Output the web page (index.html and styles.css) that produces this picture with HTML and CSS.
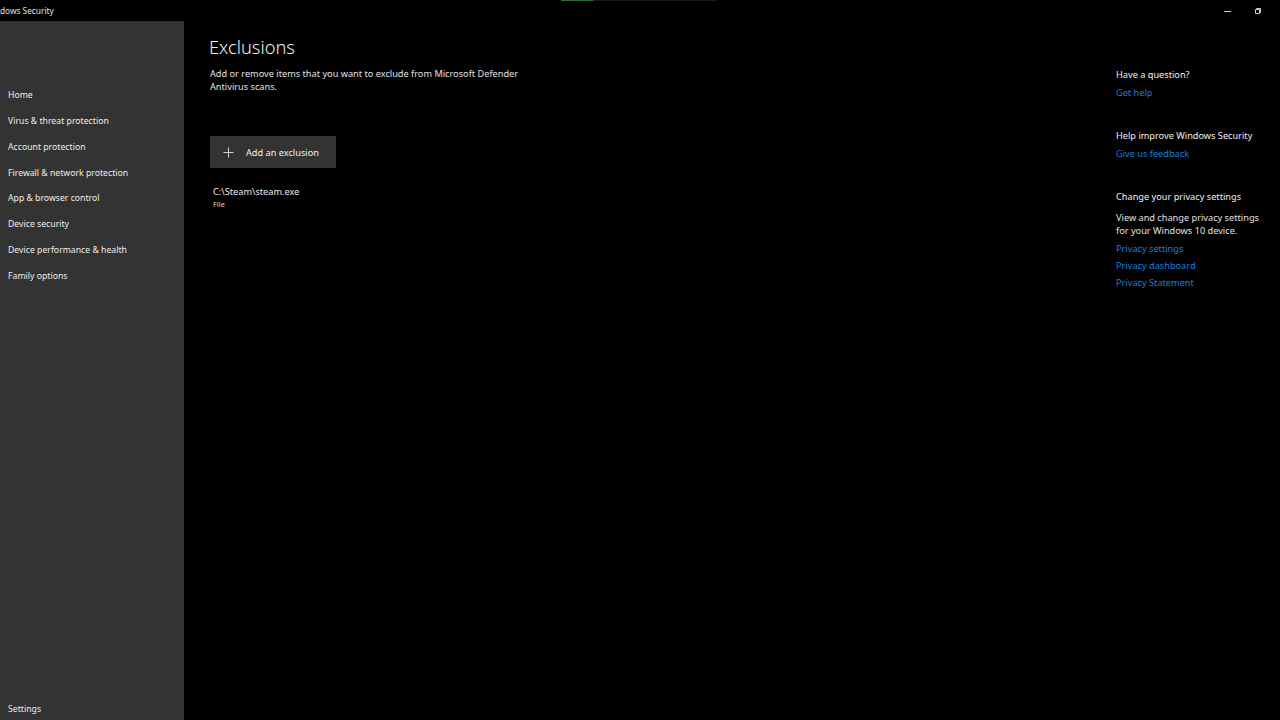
FILE: index.html
```html
<!DOCTYPE html>
<html>
<head>
<meta charset="utf-8">
<link rel="stylesheet" href="styles.css">
</head>
<body>
<div class="app">
  <header class="titlebar">
    <span class="app-title">dows Security</span>
    <div class="progress"><span class="progress-done"></span><span class="progress-rest"></span></div>
    <div class="controls">
      <span class="ctl"><svg width="10" height="10" viewBox="0 0 10 10"><path d="M1 5.5h7" stroke="#cfcfcf" stroke-width="1"/></svg></span>
      <span class="ctl"><svg width="10" height="10" viewBox="0 0 10 10"><path d="M2.5 3.5h4v4h-4z M3.5 3.5v-1h4v4h-1" fill="none" stroke="#cfcfcf" stroke-width="1"/></svg></span>
    </div>
  </header>
  <div class="body">
    <nav class="sidebar">
      <ul class="nav">
        <li>Home</li>
        <li>Virus &amp; threat protection</li>
        <li>Account protection</li>
        <li>Firewall &amp; network protection</li>
        <li>App &amp; browser control</li>
        <li>Device security</li>
        <li>Device performance &amp; health</li>
        <li>Family options</li>
      </ul>
      <div class="settings">Settings</div>
    </nav>
    <main class="content">
      <h1 class="title">Exclusions</h1>
      <p class="desc">Add or remove items that you want to exclude from Microsoft Defender<br>Antivirus scans.</p>
      <button class="add-btn">
        <svg class="plus" width="11" height="11" viewBox="0 0 11 11"><path d="M5.5 0.5v10M0.5 5.5h10" stroke="#d0d0d0" stroke-width="1"/></svg>
        <span>Add an exclusion</span>
      </button>
      <div class="item">
        <div class="item-path">C:\Steam\steam.exe</div>
        <div class="item-type">File</div>
      </div>
    </main>
    <aside class="side">
      <section class="block">
        <h2>Have a question?</h2>
        <a class="link">Get help</a>
      </section>
      <section class="block">
        <h2>Help improve Windows Security</h2>
        <a class="link">Give us feedback</a>
      </section>
      <section class="block">
        <h2>Change your privacy settings</h2>
        <p class="side-text">View and change privacy settings<br>for your Windows 10 device.</p>
        <a class="link">Privacy settings</a>
        <a class="link">Privacy dashboard</a>
        <a class="link">Privacy Statement</a>
      </section>
    </aside>
  </div>
</div>
</body>
</html>
```
FILE: styles.css
```css
* { box-sizing: border-box; margin: 0; padding: 0; }
html, body { width: 1280px; height: 720px; background: #000; overflow: hidden; }
body { font-family: "Noto Sans", "Open Sans", sans-serif; color: #e6e6e6; }
.app { display: flex; flex-direction: column; height: 720px; }
.titlebar { height: 21px; display: flex; align-items: center; position: relative; background: #000; }
.app-title { font-size: 8.3px; color: #e0e0e0; padding-bottom: 1px; }
.progress { position: absolute; left: 561px; top: 0; display: flex; height: 1px; }
.progress-done { width: 32px; background: #2f6b3a; }
.progress-rest { width: 124px; background: #161d18; }
.controls { margin-left: auto; display: flex; gap: 20px; margin-right: 17px; }
.ctl { width: 10px; height: 10px; display: flex; }
.body { flex: 1; display: flex; }
.sidebar { width: 184px; background: #333333; display: flex; flex-direction: column; padding-top: 67px; }
.nav { list-style: none; display: flex; flex-direction: column; }
.nav li { height: 25.85px; line-height: 14px; padding-left: 8px; font-size: 8.7px; color: #ececec; }
.settings { margin-top: auto; font-size: 8.7px; padding-left: 8px; padding-bottom: 5px; color: #ececec; }
.content { flex: 1; padding-left: 26px; padding-top: 14px; }
.title { font-weight: 300; font-size: 18.3px; color: #f0f0f0; line-height: 24px; margin-left: -1px; }
.desc { margin-top: 8px; font-size: 9.2px; line-height: 13px; color: #e0e0e0; }
.add-btn { margin-top: 43px; width: 126px; height: 32px; background: #333; border: none; color: #f0f0f0; font-family: inherit; font-size: 9.2px; display: flex; align-items: center; padding-left: 13px; gap: 12px; }
.item { margin-top: 17px; padding-left: 3px; }
.item-path { font-size: 9.2px; line-height: 13px; color: #ececec; }
.item-type { font-size: 7.4px; line-height: 12px; color: #d6d6d6; }
.side { width: 164px; padding-top: 47px; display: flex; flex-direction: column; gap: 28px; }
.block { display: flex; flex-direction: column; }
.block h2 { font-weight: 400; font-size: 9.2px; line-height: 14px; color: #f0f0f0; margin-bottom: 2px; }
.link { font-size: 9.2px; line-height: 17px; color: #1a7fd8; }
.side-text { font-size: 9.2px; line-height: 13px; color: #e0e0e0; margin: 4.5px 0 3px; }
```
